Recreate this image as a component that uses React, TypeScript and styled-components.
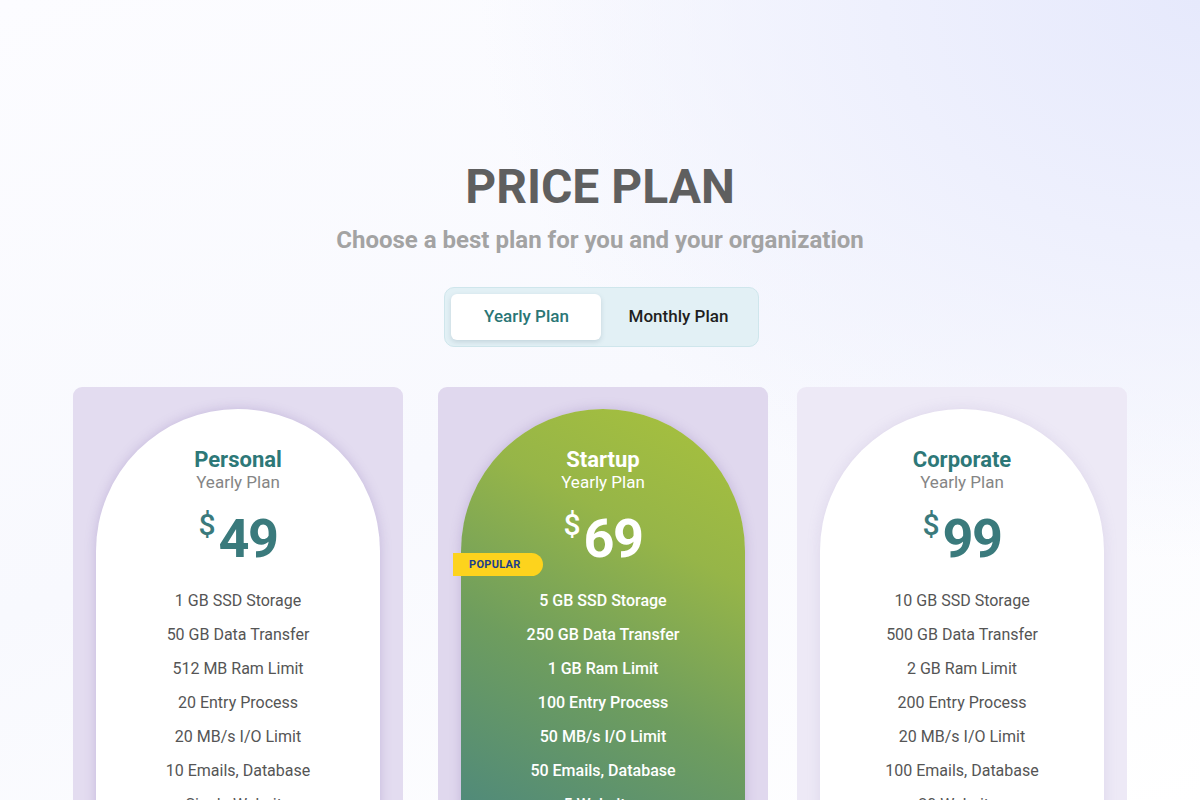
import React from "react";
import styled, { createGlobalStyle } from "styled-components";

const Global = createGlobalStyle`
  html, body { margin: 0; padding: 0; }
  body {
    font-family: Roboto, "Noto Sans", "Liberation Sans", sans-serif;
    width: 1200px;
    height: 800px;
    overflow: hidden;
  }
`;

const Page = styled.div`
  width: 1200px;
  height: 800px;
  overflow: hidden;
  box-sizing: border-box;
  display: flex;
  flex-direction: column;
  align-items: center;
  padding-top: 161px;
  background:
    radial-gradient(ellipse 900px 700px at 100% 0%, #e6e9fc 0%, #eef0fd 35%, rgba(255,255,255,0) 80%),
    linear-gradient(160deg, #fcfcff 0%, #f8f9fe 50%, #ffffff 100%);
`;

const Title = styled.h1`
  margin: 0;
  font-size: 48px;
  line-height: 52px;
  font-weight: 700;
  color: #5f5f5f;
`;

const Subtitle = styled.p`
  margin: 13px 0 0;
  font-size: 24px;
  line-height: 28px;
  font-weight: 700;
  color: #a3a3a3;
`;

const Toggle = styled.div`
  margin-top: 33px;
  margin-left: 2px;
  box-sizing: border-box;
  width: 315px;
  height: 60px;
  padding: 6px;
  display: flex;
  background: #e2f0f5;
  border: 1px solid #cfe6ec;
  border-radius: 10px;
`;

const ToggleButton = styled.button<{ $active?: boolean }>`
  width: 150px;
  height: 46px;
  border: none;
  border-radius: 6px;
  font-family: inherit;
  font-size: 17px;
  font-weight: 500;
  line-height: 20px;
  padding: 0 0 2px ${(p) => (p.$active ? 2 : 6)}px;
  cursor: pointer;
  background: ${(p) => (p.$active ? "#ffffff" : "transparent")};
  color: ${(p) => (p.$active ? "#2a7676" : "#1f1f1f")};
  box-shadow: ${(p) => (p.$active ? "0 2px 5px rgba(60,90,110,0.18)" : "none")};
`;

const Cards = styled.div`
  margin-top: 40px;
  display: flex;
  gap: 32px;
`;

const Card = styled.div<{ $bg: string; $shift?: number }>`
  position: relative;
  width: 330px;
  height: 460px;
  box-sizing: border-box;
  padding: 22px 23px 0;
  background: ${(p) => p.$bg};
  border-radius: 9px;
  margin-left: ${(p) => p.$shift ?? 0}px;
  margin-right: ${(p) => -(p.$shift ?? 0)}px;
`;

const Arch = styled.div<{ $featured?: boolean; $light?: boolean }>`
  width: 284px;
  height: 100%;
  box-sizing: border-box;
  padding-top: 39px;
  border-radius: 142px 142px 0 0;
  display: flex;
  flex-direction: column;
  align-items: center;
  background: ${(p) =>
    p.$featured
      ? "linear-gradient(208deg, #a9c23c 0%, #96b548 30%, #6e9d5e 60%, #4a8680 100%)"
      : "#ffffff"};
  box-shadow: ${(p) =>
    p.$light
      ? "0 0 14px rgba(150,135,190,0.18)"
      : "0 0 12px rgba(120,95,170,0.28)"};
`;

const PlanName = styled.div<{ $featured?: boolean }>`
  font-size: 22px;
  line-height: 24px;
  font-weight: 700;
  color: ${(p) => (p.$featured ? "#ffffff" : "#2d7878")};
`;

const PlanPeriod = styled.div<{ $featured?: boolean }>`
  font-size: 17px;
  line-height: 20px;
  font-weight: 400;
  color: ${(p) => (p.$featured ? "#ffffff" : "#858585")};
`;

const Price = styled.div<{ $featured?: boolean }>`
  margin-top: 16px;
  display: flex;
  align-items: flex-start;
  color: ${(p) => (p.$featured ? "#ffffff" : "#3a7a7c")};
  font-weight: 700;
`;

const Currency = styled.span`
  font-size: 30px;
  line-height: 30px;
  margin-top: 2px;
  margin-right: 3px;
  font-weight: 500;
`;

const Amount = styled.span`
  font-size: 54px;
  line-height: 62px;
  letter-spacing: -1.5px;
`;

const Features = styled.ul`
  list-style: none;
  margin: 14px 0 0;
  padding: 0;
  text-align: center;
`;

const Feature = styled.li<{ $featured?: boolean }>`
  font-size: 16px;
  line-height: 34px;
  font-weight: ${(p) => (p.$featured ? 500 : 400)};
  color: ${(p) => (p.$featured ? "#ffffff" : "#555555")};
`;

const Badge = styled.div`
  position: absolute;
  left: 15px;
  top: 166px;
  width: 90px;
  height: 23px;
  box-sizing: border-box;
  padding-left: 16px;
  display: flex;
  align-items: center;
  background: #fdd31d;
  border-radius: 0 12px 12px 0;
  font-size: 11px;
  font-weight: 700;
  letter-spacing: 0.3px;
  color: #1b3f8c;
`;

type Plan = {
  name: string;
  price: string;
  bg: string;
  featured?: boolean;
  light?: boolean;
  shift?: number;
  features: string[];
};

const plans: Plan[] = [
  {
    name: "Personal",
    price: "49",
    bg: "#e3dcf0",
    features: [
      "1 GB SSD Storage",
      "50 GB Data Transfer",
      "512 MB Ram Limit",
      "20 Entry Process",
      "20 MB/s I/O Limit",
      "10 Emails, Database",
      "Single Website",
    ],
  },
  {
    name: "Startup",
    price: "69",
    bg: "#e0d8ee",
    featured: true,
    shift: 3,
    features: [
      "5 GB SSD Storage",
      "250 GB Data Transfer",
      "1 GB Ram Limit",
      "100 Entry Process",
      "50 MB/s I/O Limit",
      "50 Emails, Database",
      "5 Websites",
    ],
  },
  {
    name: "Corporate",
    price: "99",
    bg: "#ede9f6",
    light: true,
    features: [
      "10 GB SSD Storage",
      "500 GB Data Transfer",
      "2 GB Ram Limit",
      "200 Entry Process",
      "20 MB/s I/O Limit",
      "100 Emails, Database",
      "20 Websites",
    ],
  },
];

export default function App() {
  return (
    <>
      <Global />
      <Page>
        <Title>PRICE PLAN</Title>
        <Subtitle>Choose a best plan for you and your organization</Subtitle>
        <Toggle>
          <ToggleButton $active>Yearly Plan</ToggleButton>
          <ToggleButton>Monthly Plan</ToggleButton>
        </Toggle>
        <Cards>
          {plans.map((p) => (
            <Card key={p.name} $bg={p.bg} $shift={p.shift}>
              <Arch $featured={p.featured} $light={p.light}>
                <PlanName $featured={p.featured}>{p.name}</PlanName>
                <PlanPeriod $featured={p.featured}>Yearly Plan</PlanPeriod>
                <Price $featured={p.featured}>
                  <Currency>$</Currency>
                  <Amount>{p.price}</Amount>
                </Price>
                <Features>
                  {p.features.map((f) => (
                    <Feature key={f} $featured={p.featured}>
                      {f}
                    </Feature>
                  ))}
                </Features>
              </Arch>
              {p.featured && <Badge>POPULAR</Badge>}
            </Card>
          ))}
        </Cards>
      </Page>
    </>
  );
}
